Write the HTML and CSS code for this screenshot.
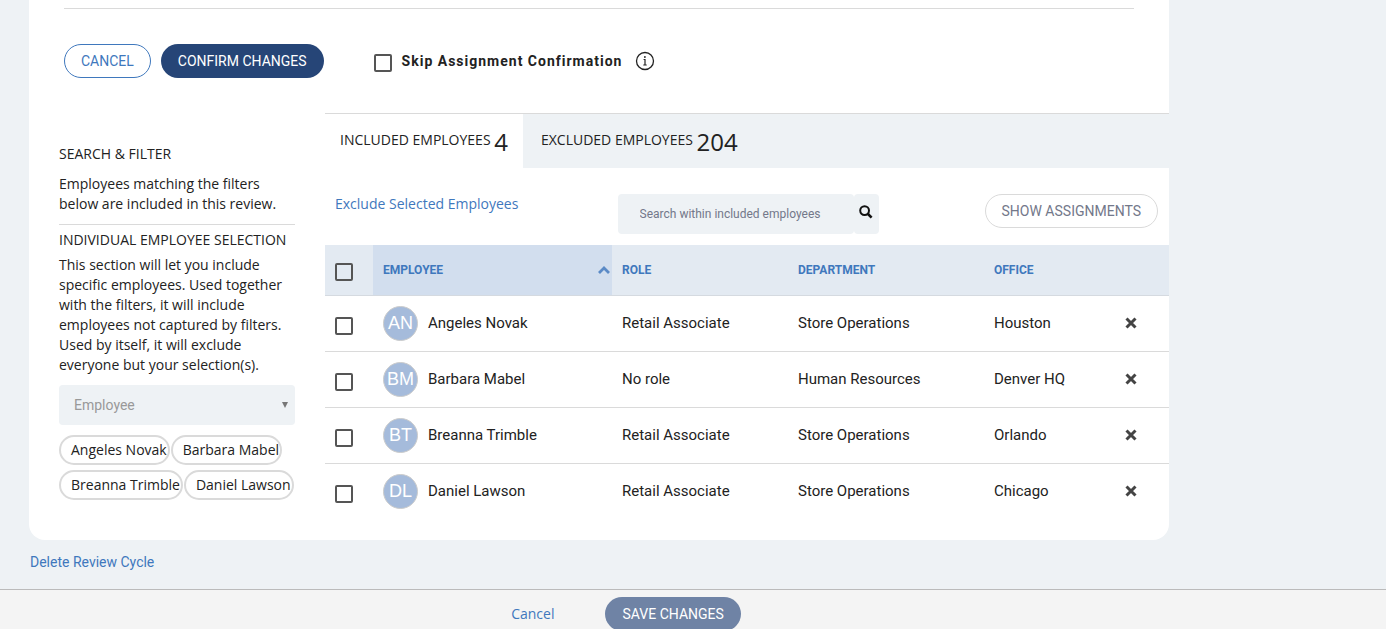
FILE: index.html
```html
<!DOCTYPE html>
<html lang="en">
<head>
  <meta charset="UTF-8" />
  <meta name="viewport" content="width=device-width, initial-scale=1" />
  <title>Edit Review Cycle</title>
  <link rel="stylesheet" href="styles.css">
</head>
<body>
  <main>
    <div class="card">
      <hr class="divider">

      <div class="actions">
        <button type="button" class="btn btn-outline">CANCEL</button>
        <button type="button" class="btn btn-primary">CONFIRM CHANGES</button>
        <div class="skip">
          <input type="checkbox" class="checkbox" id="skip" />
          <label for="skip">Skip Assignment Confirmation</label>
          <svg class="info" viewBox="0 0 20 20" width="20" height="20" fill="none" stroke="#222" aria-hidden="true">
            <circle cx="10" cy="10" r="8.5" stroke-width="1.3" />
            <path d="M8.6 8.5H10V14M8.3 14H11.7" stroke-width="1.2" />
            <circle cx="9.9" cy="6" r="0.9" fill="#222" stroke="none" />
          </svg>
        </div>
      </div>

      <div class="columns">
        <aside class="sidebar">
          <h2>SEARCH &amp; FILTER</h2>
          <p>Employees matching the filters below are included in this review.</p>
          <hr>
          <h2>INDIVIDUAL EMPLOYEE SELECTION</h2>
          <p>This section will let you include specific employees. Used together with the filters, it will include employees not captured by filters. Used by itself, it will exclude everyone but your selection(s).</p>
          <select class="picker" aria-label="Employee">
            <option>Employee</option>
          </select>
          <ul class="chips">
            <li>Angeles Novak</li>
            <li>Barbara Mabel</li>
            <li>Breanna Trimble</li>
            <li>Daniel Lawson</li>
          </ul>
        </aside>

        <section class="employees">
          <div class="tabs">
            <button type="button" class="tab active">INCLUDED EMPLOYEES <span class="count">4</span></button>
            <button type="button" class="tab">EXCLUDED EMPLOYEES <span class="count">204</span></button>
          </div>

          <div class="toolbar">
            <a href="#" class="link">Exclude Selected Employees</a>
            <form class="search">
              <input type="text" placeholder="Search within included employees" aria-label="Search within included employees" />
              <button type="button" aria-label="Search">
                <svg viewBox="0 0 14 14" width="14" height="14" fill="none" stroke="#111" aria-hidden="true">
                  <circle cx="5.6" cy="5.6" r="4.4" stroke-width="2" />
                  <path d="M9 9L12.6 12.6" stroke-width="2.6" />
                </svg>
              </button>
            </form>
            <button type="button" class="btn btn-muted">SHOW ASSIGNMENTS</button>
          </div>

          <table>
            <thead>
              <tr>
                <th class="col-check"><input type="checkbox" class="checkbox" aria-label="Select all" /></th>
                <th class="col-employee sorted">
                  <div class="sort">EMPLOYEE
                    <svg viewBox="0 0 12 8" width="12" height="8" fill="none" stroke="#5b8ac6" stroke-width="2.8" aria-hidden="true"><path d="M1 7L6 2L11 7" /></svg>
                  </div>
                </th>
                <th class="col-role">ROLE</th>
                <th class="col-department">DEPARTMENT</th>
                <th>OFFICE</th>
                <th class="col-remove"></th>
              </tr>
            </thead>
            <tbody>
              <tr>
                <td><input type="checkbox" class="checkbox" aria-label="Select Angeles Novak" /></td>
                <td><div class="person"><span class="avatar">AN</span>Angeles Novak</div></td>
                <td>Retail Associate</td>
                <td>Store Operations</td>
                <td>Houston</td>
                <td><button type="button" class="remove" aria-label="Remove Angeles Novak"><svg viewBox="0 0 12 12" width="12" height="12"><path d="M1.5 1.5L10.5 10.5M10.5 1.5L1.5 10.5" /></svg></button></td>
              </tr>
              <tr>
                <td><input type="checkbox" class="checkbox" aria-label="Select Barbara Mabel" /></td>
                <td><div class="person"><span class="avatar">BM</span>Barbara Mabel</div></td>
                <td>No role</td>
                <td>Human Resources</td>
                <td>Denver HQ</td>
                <td><button type="button" class="remove" aria-label="Remove Barbara Mabel"><svg viewBox="0 0 12 12" width="12" height="12"><path d="M1.5 1.5L10.5 10.5M10.5 1.5L1.5 10.5" /></svg></button></td>
              </tr>
              <tr>
                <td><input type="checkbox" class="checkbox" aria-label="Select Breanna Trimble" /></td>
                <td><div class="person"><span class="avatar">BT</span>Breanna Trimble</div></td>
                <td>Retail Associate</td>
                <td>Store Operations</td>
                <td>Orlando</td>
                <td><button type="button" class="remove" aria-label="Remove Breanna Trimble"><svg viewBox="0 0 12 12" width="12" height="12"><path d="M1.5 1.5L10.5 10.5M10.5 1.5L1.5 10.5" /></svg></button></td>
              </tr>
              <tr>
                <td><input type="checkbox" class="checkbox" aria-label="Select Daniel Lawson" /></td>
                <td><div class="person"><span class="avatar">DL</span>Daniel Lawson</div></td>
                <td>Retail Associate</td>
                <td>Store Operations</td>
                <td>Chicago</td>
                <td><button type="button" class="remove" aria-label="Remove Daniel Lawson"><svg viewBox="0 0 12 12" width="12" height="12"><path d="M1.5 1.5L10.5 10.5M10.5 1.5L1.5 10.5" /></svg></button></td>
              </tr>
            </tbody>
          </table>
        </section>
      </div>
    </div>

    <a href="#" class="delete">Delete Review Cycle</a>
  </main>

  <footer>
    <a href="#" class="link">Cancel</a>
    <button type="button" class="btn btn-save">SAVE CHANGES</button>
  </footer>
</body>
</html>
```
FILE: styles.css
```css
* {
  box-sizing: border-box;
}

body {
  margin: 0;
  height: 100vh;
  overflow: hidden;
  background: #eef2f5;
  color: #222;
  font: 14px/20px 'Open Sans', sans-serif;
}

button, input, select {
  font-family: inherit;
}

main {
  padding: 0 29px 17px;
}

.card {
  max-width: 1140px;
  padding: 8px 0 21px;
  background: #fff;
  border-radius: 0 0 16px 16px;
}

hr {
  margin: 0;
  border: 0;
  border-top: 1px solid #dadada;
}

.divider {
  margin: 0 35px;
}

.actions {
  display: flex;
  align-items: center;
  gap: 10px;
  padding: 35px 35px;
}

.btn {
  height: 34px;
  padding: 0 16px;
  border: 1px solid transparent;
  border-radius: 17px;
  background: #fff;
  font: 14px Roboto, sans-serif;
  white-space: nowrap;
  cursor: pointer;
}

.btn-outline {
  border-color: #3f78bd;
  color: #3f78bd;
}

.btn-primary {
  background: #264577;
  color: #fff;
}

.btn-muted {
  margin-left: 106px;
  border-color: #dadada;
  color: #73788a;
}

.btn-save {
  background: #6f83a5;
  color: #fff;
}

.skip {
  display: flex;
  align-items: center;
  gap: 10px;
  margin-left: 40px;
  font: bold 14px Roboto, sans-serif;
  letter-spacing: 1px;
}

.info {
  margin-left: 3px;
}

.checkbox {
  appearance: none;
  display: block;
  width: 18px;
  height: 18px;
  margin: 3px 0 0;
  border: 2px solid #555;
  border-radius: 2px;
  background: transparent;
}

.checkbox:checked {
  background: #555;
}

.columns {
  display: grid;
  grid-template-columns: 236px 1fr;
  gap: 30px;
  padding-left: 30px;
}

.sidebar {
  padding-top: 31px;
}

h2 {
  margin: 0;
  font-size: 14px;
  font-weight: normal;
  white-space: nowrap;
}

.sidebar p {
  margin: 5px 0 10px;
}

.sidebar h2:first-child {
  margin-bottom: 10px;
}

.sidebar hr {
  margin-bottom: 5px;
}

.picker {
  appearance: none;
  display: block;
  width: 100%;
  height: 40px;
  padding: 0 15px;
  border: 0;
  border-radius: 4px;
  color: #999;
  font: 14px Roboto, sans-serif;
  background: #eef2f5 url("data:image/svg+xml,%3Csvg xmlns='http://www.w3.org/2000/svg' width='6' height='6'%3E%3Cpath d='M0 0H6L3 6Z' fill='%23777'/%3E%3C/svg%3E") no-repeat right 7px center;
}

.chips {
  display: flex;
  flex-wrap: wrap;
  gap: 5px 1px;
  margin: 10px 0 0;
  padding: 0;
  list-style: none;
}

.chips li {
  height: 30px;
  padding: 3px 1px 3px 10px;
  border: 2px solid #dadada;
  border-radius: 15px;
}

.employees {
  min-width: 0;
}

.tabs {
  display: flex;
  border-top: 1px solid #dadada;
  background: #eef2f5;
}

.tab {
  height: 54px;
  padding: 0 18px;
  border: 0;
  background: none;
  color: #222;
  font: 14px 'Open Sans', sans-serif;
  cursor: pointer;
}

.tab.active {
  padding: 0 15px;
  background: #fff;
}

.count {
  font-size: 24px;
  vertical-align: middle;
}

.toolbar {
  display: flex;
  align-items: flex-start;
  padding: 26px 11px 11px 10px;
}

.link {
  color: #3f78bd;
  text-decoration: none;
}

.search {
  display: flex;
  margin-left: auto;
}

.search input {
  width: 236px;
  height: 40px;
  padding: 0 22px;
  border: 0;
  border-radius: 4px;
  background: #eef2f5;
  font: 12px Roboto, sans-serif;
}

.search input::placeholder {
  color: #73788a;
}

.search button {
  width: 25px;
  padding: 0;
  border: 0;
  border-radius: 4px;
  background: #eef2f5;
}

table {
  width: 100%;
  table-layout: fixed;
  border-collapse: collapse;
  font: 15px Roboto, sans-serif;
}

th {
  height: 50px;
  padding: 0 10px;
  background: #e3eaf2;
  border-bottom: 1px solid #d5dae0;
  color: #3f78bd;
  font-size: 12px;
  text-align: left;
}

td {
  height: 56px;
  padding: 0 10px;
  border-bottom: 1px solid #dadada;
}

td .checkbox,
th .checkbox {
  margin-top: 5px;
}

tr:last-child td {
  border-bottom: 0;
}

.col-check {
  width: 48px;
}

.col-employee {
  width: 239px;
}

.col-role {
  width: 176px;
}

.col-department {
  width: 196px;
}

.col-remove {
  width: 54px;
}

th.sorted {
  padding-right: 2px;
  background: #d2deee;
}

.sort {
  display: flex;
  justify-content: space-between;
  align-items: center;
}

.person {
  display: flex;
  align-items: center;
  gap: 10px;
}

.avatar {
  display: flex;
  justify-content: center;
  align-items: center;
  width: 35px;
  height: 35px;
  border: 1px solid #ccc;
  border-radius: 50%;
  background: #a5bbdb;
  color: #fff;
  font-family: 'Liberation Sans', sans-serif;
  font-size: 18px;
}

.remove {
  display: block;
  padding: 0;
  border: 0;
  background: none;
  cursor: pointer;
}

.remove svg {
  display: block;
  stroke: #444;
  stroke-width: 3;
}

.delete {
  display: inline-block;
  margin: 12px 1px 0;
  color: #3f78bd;
  font-family: Roboto, sans-serif;
  text-decoration: none;
}

footer {
  display: flex;
  justify-content: center;
  align-items: center;
  gap: 51px;
  padding: 7px 134px 7px 0;
  border-top: 1px solid #bbb;
  background: #f4f4f4;
}
```
